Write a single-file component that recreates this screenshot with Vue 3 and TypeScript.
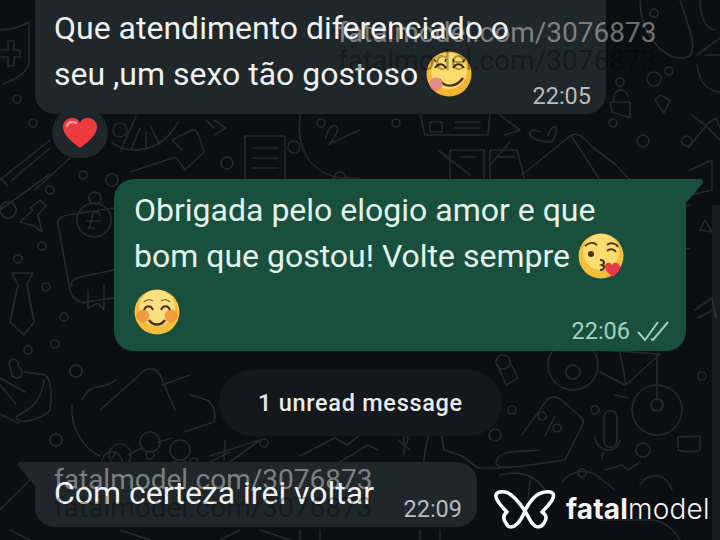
<script setup lang="ts">
interface Dot { x: number; y: number; r: number }

// small rings scattered over the wallpaper
const dots: Dot[] = [
  [17, 99, 4], [33, 123, 4], [50, 190, 4], [83, 175, 4], [95, 198, 6], [42, 246, 4], [18, 259, 4],
  [46, 287, 4], [64, 317, 4], [55, 344, 4], [28, 350, 4], [76, 371, 6], [56, 440, 6], [112, 180, 6],
  [120, 130, 7], [227, 163, 6], [340, 178, 6], [396, 123, 4], [321, 123, 4], [294, 147, 6],
  [620, 82, 4], [654, 13, 4], [669, 71, 4], [654, 79, 7], [643, 141, 6], [687, 141, 5], [613, 123, 4],
  [702, 376, 4], [595, 410, 4], [512, 410, 4], [495, 435, 6], [643, 450, 7], [582, 473, 4],
  [150, 455, 4], [264, 443, 4], [194, 462, 4]
].map(([x, y, r]) => ({ x, y, r }))

const doodles: string[] = [
  // shield with cross
  'M0 30 C12 30 22 26 29 22 V62 C29 72 14 80 3 84 M0 50 H8 V41 H14 V50 H20 V57 H14 V66 H8 V57 H0',
  // wheel and star cluster under the first bubble
  'M112 142 C125 155 160 155 178 122 M120 152 L136 116 M131 150 L140 128 M146 150 V132 M160 145 L150 125',
  'M172 140 L192 130 C198 128 200 140 204 152 L185 170 L176 157 L130 172 M172 140 L182 150',
  'M0 180 L50 140 M12 180 L50 148 M70 158 L35 190 M0 178 L8 186',
  'M214 120 L226 128 L214 135 M206 120 L214 128',
  // note sheet
  'M245 136 H285 V180 M245 136 V180 M252 148 H278 M252 158 H278 M252 168 H278',
  // signature card
  'M300 115 C296 150 310 172 340 178 H360 M326 138 C330 118 342 126 336 134 C330 146 325 146 333 142 L360 130',
  // bubble-top strip
  'M420 113 H490 L488 135 H425 Z M430 122 H442 V132 H430 Z M455 122 H480 M455 128 H480',
  'M500 115 L520 130 L505 135 M438 150 L470 175 M490 165 L510 142',
  // book
  'M450 180 V150 H484 V180 M490 180 V150 H517 L525 180 M460 157 H475 M498 157 L514 157',
  // gift
  'M522 175 L570 136 C576 132 584 136 590 145 L616 165 L630 180 M572 137 L600 180 M540 132 C525 125 524 142 552 142 C560 130 556 118 548 135',
  // target
  'M628 190 a20 20 0 1 0 0.1 0',
  // pad lock
  'M610 102 H630 V118 L612 112 Z M614 100 C612 90 625 85 628 96',
  'M655 100 L664 113 L670 100 L660 95 Z',
  'M692 115 L705 125 L716 118 L720 128 M688 148 L706 126 L720 140',
  // top right swoops
  'M640 0 C640 30 660 60 685 58 C700 55 690 30 680 0 M700 0 C700 15 705 30 716 30',
  'M697 55 L720 38 M697 65 C700 85 708 90 720 92 M705 55 H720',
  // coin card
  'M58 224 C57 218 62 216 68 215 L114 208 M58 224 L70 290 C72 298 78 302 85 303 M72 286 C70 280 75 278 85 276 L114 270 M85 302 L114 298 M88 290 V308 L98 303 L104 310 V285',
  'M94 220 m-17 0 a17 17 0 1 0 34 0 a17 17 0 1 0 -34 0 M94 228 H88 C94 222 90 214 94 212 C98 210 100 214 100 216 M87 221 H100',
  // chess piece
  'M20 222 L33 210 L30 208 L40 200 L46 206 L38 215 L42 232 L34 226 Z M8 218 a8 8 0 1 1 0.1 0',
  'M0 210 L50 174',
  // tie
  'M12 273 H33 L27 285 L34 322 L24 335 L10 322 L18 285 Z',
  // hand-shaped cluster
  'M0 378 L25 392 M0 385 L16 404 M10 366 C6 358 20 356 18 366 C26 372 20 382 12 376 Z M24 372 L45 375 C52 380 52 398 50 410 C44 418 20 426 16 418 C20 410 40 412 44 380 M0 414 L18 423',
  'M82 400 C92 380 100 392 116 380 M72 405 C70 430 86 450 100 456 M112 458 L116 452 M120 455 m-11 0 a11 11 0 1 0 22 0 a11 11 0 1 0 -22 0',
  'M100 410 L145 370 C155 366 160 372 163 382 L175 410 M162 385 L190 375 M190 395 L207 400 C215 405 216 416 214 422 L184 432 M180 440 a10 10 0 1 0 0.1 0 M150 432 a10 10 0 1 0 0.1 0 M112 452 a10 10 0 1 0 0.1 0 M172 438 L158 442 M142 448 L128 455',
  'M180 460 a11 11 0 1 0 0.1 0 M210 462 L230 452 M225 440 L224 460',
  // trend line, dollar and bag
  'M210 456 L260 440 L230 462 M300 456 L335 438 L347 445 L360 435 M340 462 L368 445 L378 450 M405 445 C414 436 398 430 406 425 M398 440 L410 450 M404 420 V455',
  'M424 462 C424 448 430 430 436 420 M440 426 L444 450 L462 456 L478 468 L500 468',
  // wheel + bicycle
  'M573 340 a25 25 0 1 0 0.1 0 M573 365 a7 7 0 1 0 0.1 0 M600 372 L625 385 M620 352 L626 385 L660 354 L600 350 M657 353 L657 400 M615 395 L628 398 M657 385 a25 25 0 1 0 0.1 0 M657 399 a6 6 0 1 0 0.1 0',
  'M503 355 a7 7 0 1 0 0.1 0 M498 365 L506 385 L518 378 L510 362',
  // percent tag
  'M522 435 L546 401 C550 396 556 396 560 399 L582 418 C584 421 584 423 582 426 L565 460 L530 465 M542 412 a4 4 0 1 0 0.1 0 M557 424 a4 4 0 1 0 0.1 0 M545 436 L555 416 M530 465 C510 468 490 470 498 458 C505 450 520 452 540 450',
  // mic
  'M604 418 C604 408 616 408 617 418 L617 440 C616 450 604 450 604 440 Z M595 437 C596 452 616 456 620 440 M603 452 L602 460',
  // folder
  'M678 437 L700 436 L700 450 C698 452 682 452 678 450 Z',
  'M605 470 L622 465 L628 470 L640 462 M640 485 C650 470 668 475 672 490',
  'M500 475 C520 470 535 475 545 490 M530 480 L528 500 M562 482 C570 470 590 468 600 478 L615 490',
  // bottom strip
  'M0 510 L30 480 M10 530 L30 540 M120 530 L150 540 M220 540 L240 530 M260 530 L290 540 M300 530 V540 M320 530 V540 M420 530 V540 M440 530 V540 M600 520 H650 C670 520 680 540 680 540',
  'M690 170 L712 160 V190 L690 195 M690 205 a22 22 0 1 0 0.1 44 M705 220 L712 232 L700 230 Z M695 310 L712 298 L716 318 M698 318 L712 310'
]
</script>

<template>
  <div class="screen">
    <svg class="wallpaper" width="720" height="540" viewBox="0 0 720 540" fill="none">
      <path v-for="(d, i) in doodles" :key="i" :d="d" />
      <circle v-for="(dot, i) in dots" :key="'c' + i" :cx="dot.x" :cy="dot.y" :r="dot.r" />
    </svg>
    <div class="scroll-strip"></div>

    <div class="chat">
      <div class="row">
        <div class="bubble incoming first">
          <p class="text">
            Que atendimento diferenciado o<br />seu ,um sexo tão gostoso
            <svg class="emoji" viewBox="0 0 46 46">
              <circle cx="23" cy="23" r="22.5" fill="#f2b632" />
              <circle cx="23" cy="20" r="18" fill="#fbdc6c" />
              <path d="M9 17 C12 12 17 12 20 17 M27 17 C30 12 35 12 38 17" stroke="#4a3010" stroke-width="2" fill="none" />
              <path d="M10 11 L8 8 M19 11 L20 8 M28 11 L27 8 M37 11 L39 8" stroke="#4a3010" stroke-width="1.4" />
              <path d="M13 28 C18 37 30 37 37 27" stroke="#4a3010" stroke-width="2.4" fill="none" />
              <ellipse cx="10" cy="33" rx="6.5" ry="6.5" fill="#e58a8a" />
            </svg>
          </p>
          <span class="time">22:05</span>
        </div>
        <div class="reaction">
          <svg viewBox="0 0 36 32" width="36" height="32">
            <path d="M18 31 C10 25 1 18 1 10 C1 4 6 1 10 1 C14 1 17 3 18 6 C19 3 22 1 26 1 C30 1 35 4 35 10 C35 18 26 25 18 31 Z" fill="#ee3b3f" />
            <path d="M5 9 C6 5 11 4 14 6" stroke="#ff9a9a" stroke-width="2.5" fill="none" stroke-linecap="round" />
          </svg>
        </div>
      </div>

      <div class="bubble outgoing">
        <p class="text">
          Obrigada pelo elogio amor e que<br />bom que gostou! Volte sempre
          <svg class="emoji" viewBox="0 0 46 46">
            <circle cx="23" cy="23" r="22.5" fill="#f5be3c" />
            <circle cx="23" cy="19" r="18" fill="#fcdc6e" />
            <circle cx="13" cy="21" r="3" fill="#4a3010" />
            <path d="M7 13 C11 9 16 9 19 12 M29 12 C32 9 38 10 40 14 M29 18 C32 15 36 16 38 19" stroke="#4a3010" stroke-width="1.8" fill="none" />
            <path d="M22 27 C27 27 27 31 24 32 C27 33 27 37 22 37" stroke="#4a3010" stroke-width="2" fill="none" />
            <path d="M35 44 C30 40 27 37 27 33 C27 30 32 28 34 32 C36 28 42 30 42 34 C42 38 38 41 35 44 Z" fill="#e8394a" />
          </svg>
          <svg class="emoji emoji-solo" viewBox="0 0 46 46">
            <circle cx="23" cy="23" r="22.5" fill="#f5be3c" />
            <circle cx="23" cy="19" r="18" fill="#fcdf80" />
            <circle cx="9" cy="27" r="6.5" fill="#f0923a" opacity="0.85" />
            <circle cx="37" cy="27" r="6.5" fill="#f0923a" opacity="0.85" />
            <path d="M10 21 C12 16 17 16 19 21 M27 21 C29 16 34 16 36 21" stroke="#4a3010" stroke-width="2" fill="none" />
            <path d="M10 13 C13 10 16 10 19 12 M27 12 C30 10 33 10 36 13" stroke="#8a6428" stroke-width="1.4" fill="none" />
            <path d="M15 31 C19 37 27 37 31 31" stroke="#4a3010" stroke-width="2.4" fill="none" />
          </svg>
        </p>
        <span class="time out-time">
          22:06
          <svg class="ticks" viewBox="0 0 34 22" width="34" height="22" fill="none">
            <path d="M2 12 L9 20 L22 2 M15 19 L17 20 L32 2" />
          </svg>
        </span>
        <svg class="tail tail-out" width="20" height="24" viewBox="0 0 20 24">
          <path d="M0 0 H14 C17 0 18 3 16 5 L0 24 Z" />
        </svg>
      </div>

      <div class="pill">1 unread message</div>

      <div class="bubble incoming last">
        <svg class="tail tail-in" width="18" height="24" viewBox="0 0 18 24">
          <path d="M18 0 H4 C1 0 0 3 2 5 L18 24 Z" />
        </svg>
        <p class="text">Com certeza irei voltar</p>
        <span class="time">22:09</span>
      </div>
    </div>

    <span class="mark light mark-a">fatalmodel.com/3076873</span>
    <span class="mark dark mark-b">fatalmodel.com/3076873</span>
    <span class="mark light mark-c">fatalmodel.com/3076873</span>
    <span class="mark dark mark-d">fatalmodel.com/3076873</span>

    <div class="logo">
      <svg width="70" height="50" viewBox="0 0 70 50" fill="none">
        <path d="M35 27 C29 18 22 9 15 8 C9 7 5 9 6 13 C7 18 13 24 17 28 C13 31 13 35 16 39 C18 44 23 44 27 40 C30 37 33 32 35 27 C38 20 45 9 55 8 C61 7 65 9 63 14 C62 18 56 24 52 28 C57 31 57 35 54 39 C51 44 46 44 43 40 C40 37 38 32 35 27 Z" />
      </svg>
      <span class="logo-text"><b>fatal</b>model</span>
    </div>
  </div>
</template>

<style>
html, body {
  margin: 0;
  background: #0b0e12;
}
</style>

<style scoped>
.screen {
  position: relative;
  width: 720px;
  height: 540px;
  overflow: hidden;
  background: #0b0e12;
  font-family: Roboto, "Liberation Sans", sans-serif;
}

.wallpaper {
  position: absolute;
  inset: 0;
  stroke: #26292d;
  stroke-width: 1.6;
  stroke-linecap: round;
  stroke-linejoin: round;
}

.scroll-strip {
  position: absolute;
  top: 205px;
  right: 0;
  bottom: 0;
  width: 8px;
  background: rgba(255, 255, 255, 0.05);
}

.chat {
  position: relative;
  display: flex;
  flex-direction: column;
  margin-top: -20px;
}

.row {
  position: relative;
}

.bubble {
  position: relative;
  box-sizing: border-box;
}

.incoming {
  background: #1f272a;
  color: #eef0f1;
}

.first {
  width: 571px;
  height: 134px;
  margin-left: 35px;
  padding: 25px 19px 0;
  border-radius: 20px;
}

.reaction {
  position: absolute;
  left: 52px;
  top: 128px;
  width: 56px;
  height: 50px;
  display: flex;
  align-items: center;
  justify-content: center;
  border-radius: 25px;
  background: #1f272a;
}

.text {
  margin: 0;
  font-size: 32px;
  line-height: 46px;
}

.emoji {
  width: 46px;
  height: 46px;
  vertical-align: -12px;
}

.emoji-solo {
  display: block;
  margin: 10px 0 0;
}

.time {
  position: absolute;
  right: 15px;
  bottom: 4px;
  font-size: 23.5px;
  line-height: 28px;
  color: #b6bcbf;
}

.outgoing {
  align-self: flex-start;
  width: 572px;
  height: 172px;
  margin: 65px 0 0 114px;
  padding: 8px 20px 0;
  border-radius: 20px 0 20px 20px;
  background: #18503d;
  color: #e4f2ec;
}

.out-time {
  right: 16px;
  bottom: 6px;
  display: flex;
  align-items: center;
  gap: 6px;
  color: #a5cfc0;
}

.ticks {
  stroke: #a5cfc0;
  stroke-width: 2;
}

.tail {
  position: absolute;
  top: 0;
  display: block;
}

.tail-out {
  left: 100%;
  fill: #18503d;
}

.tail-in {
  right: 100%;
  fill: #1f272a;
}

.pill {
  align-self: flex-start;
  margin: 19px 0 0 219px;
  width: 283px;
  height: 66px;
  display: flex;
  align-items: center;
  justify-content: center;
  border-radius: 33px;
  background: #14171b;
  color: #e8eaec;
  font-size: 23.5px;
  font-weight: 500;
  letter-spacing: 0.7px;
}

.last {
  align-self: flex-start;
  width: 442px;
  height: 65px;
  margin: 26px 0 0 35px;
  padding: 8px 19px 0;
  border-radius: 0 20px 20px 20px;
}

.mark {
  position: absolute;
  font-size: 28px;
  line-height: 32px;
  white-space: nowrap;
}

.light {
  color: rgba(255, 255, 255, 0.42);
}

.dark {
  color: rgba(0, 0, 0, 0.32);
}

.mark-a {
  left: 338px;
  top: 17px;
}

.mark-b {
  left: 338px;
  top: 45px;
}

.mark-c {
  left: 54px;
  top: 464px;
}

.mark-d {
  left: 54px;
  top: 492px;
}

.logo {
  position: absolute;
  left: 490px;
  top: 484px;
  display: flex;
  align-items: center;
  gap: 6px;
}

.logo-text {
  color: #f4f4f4;
  font-family: Inter, Lato, sans-serif;
  font-size: 28px;
  font-weight: 300;
  letter-spacing: 0.2px;
}

.logo-text b {
  font-weight: 700;
}

.logo svg {
  stroke: #fff;
  stroke-width: 3.5;
  stroke-linejoin: round;
}
</style>
